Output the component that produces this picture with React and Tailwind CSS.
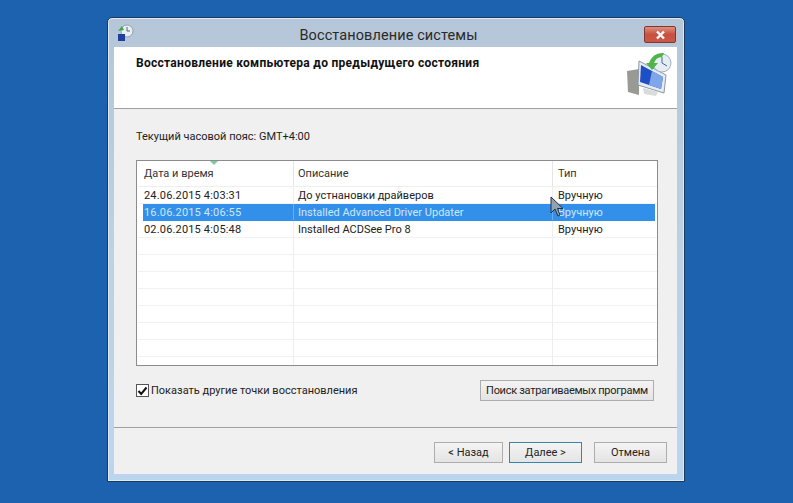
const font = { fontFamily: 'Roboto, "Noto Sans", sans-serif' };

const rows = [
  ['24.06.2015 4:03:31', 'До устнановки драйверов', 'Вручную'],
  ['16.06.2015 4:06:55', 'Installed Advanced Driver Updater', 'Вручную', true],
  ['02.06.2015 4:05:48', 'Installed ACDSee Pro 8', 'Вручную'],
  [], [], [], [], [], [], [], [],
];

function Row({ cells }) {
  const selected = cells[3];
  return (
    <div className={`flex h-[17px] items-center border-b text-[11px] leading-none ${selected ? 'ml-[5px] mr-[2px] border-[#3390ea] bg-[#3390ea] text-[#cfe6fb]' : 'border-[#f1f1f1] text-[#222]'}`}>
      <div className={`flex h-full items-center border-r tracking-[0.17px] ${selected ? 'w-[151px] pl-[1px] border-[#6aaef0]' : 'w-[156px] pl-[6px] border-[#eeeeee]'}`}>{cells[0]}</div>
      <div className={`flex h-full w-[259px] items-center border-r pl-[4px] ${selected ? 'border-[#6aaef0]' : 'border-[#eeeeee]'}`}>{cells[1]}</div>
      <div className="flex-1 pl-[5px]">{cells[2]}</div>
    </div>
  );
}

function Button({ className, children }) {
  return (
    <button className={`flex h-[21px] items-center justify-center whitespace-nowrap border bg-gradient-to-b from-[#f4f4f4] to-[#e4e4e4] text-[11px] leading-none text-[#222] ${className}`}>
      {children}
    </button>
  );
}

function RestoreIcon() {
  return (
    <svg width="46" height="46" viewBox="0 0 46 46" className="absolute right-[5px] top-[4px]">
      <path d="M1 20 L13 18 L13 44 L2 41 Z" fill="#9a9a94" />
      <path d="M13 10 L40 24 L38 42 L12 34 Z" fill="#e6ecf2" stroke="#8d97a3" />
      <path d="M15 14 L37 26 L35 38 L14 31 Z" fill="#1f4fc4" />
      <path d="M26 20 L37 26 L35 38 L23 34 Z" fill="#7fa6e8" />
      <path d="M17 37 L32 41 L30 45 L18 43 Z" fill="#d9dcdc" />
      <circle cx="36" cy="12" r="9" fill="#e6edf4" stroke="#9fb0c0" />
      <path d="M36 6 V12 L41 15" fill="none" stroke="#4c6a86" />
      <path d="M23 12 Q27 1 38 2 L36 6 Q30 6 28 12 L32 12 L26 19 L20 12 Z" fill="#4fb548" />
    </svg>
  );
}

function SmallIcon() {
  return (
    <svg width="18" height="18" viewBox="0 0 18 18" className="ml-[8px] mt-[6px] shrink-0">
      <circle cx="11" cy="7" r="6" fill="#e8eef2" stroke="#93a5ae" />
      <path d="M11 3 V7 H14" fill="none" stroke="#567" />
      <path d="M2 7 L6 2 L8 6 Z" fill="#3fa84a" />
      <rect x="2" y="10" width="7" height="7" fill="#1f3f9c" />
    </svg>
  );
}

function Cursor() {
  return (
    <svg width="14" height="22" viewBox="0 0 14 22" className="absolute left-[436px] top-[87px]">
      <path d="M1 1 V17 L5 13 L8 20 L10 19 L7.5 12.5 L13 12.5 Z" fill="#8fa3b4" stroke="#26303a" strokeWidth="1" />
    </svg>
  );
}

export default function App() {
  return (
    <div className="h-[503px] w-[793px] overflow-hidden bg-[#1c62ae] pl-[107px] pt-[17px]" style={font}>
      <div className="flex h-[465px] w-[578px] flex-col rounded-t-[5px] border border-[#1b3b5e] bg-gradient-to-b from-[#b4c6d8] via-[#bdd0e4] to-[#bcd5ee] shadow-[inset_0_0_0_1px_#dfe9f3]">
        <div className="relative flex h-[29px] shrink-0">
          <SmallIcon />
          <div className="flex-1 pr-[41px] pt-[8px] text-center text-[14.5px] leading-[20px] tracking-[0.1px] text-[#2a2a2a]">Восстановление системы</div>
          <button className="absolute right-[8px] top-[8px] flex h-[17px] w-[32px] items-center justify-center rounded-[2px] border border-[#7c3a32] bg-gradient-to-b from-[#dd8f80] via-[#c8503e] to-[#c9584a]">
            <svg width="11" height="10" viewBox="0 0 11 10">
              <path d="M2 1.5 L9 8.5 M9 1.5 L2 8.5" stroke="#fff" strokeWidth="2.4" />
            </svg>
          </button>
        </div>
        <div className="ml-[6px] mr-[7px] flex h-[427px] flex-col bg-[#f0f0f0]">
          <div className="relative h-[62px] shrink-0 border-b border-[#a0a0a0] bg-white pl-[22px] pt-[9px] text-[12px] font-bold leading-[15px] tracking-[0.28px] text-[#111]">
            Восстановление компьютера до предыдущего состояния
            <RestoreIcon />
          </div>
          <div className="relative flex-1">
            <div className="pl-[22px] pt-[20px] text-[11px] leading-[15px] text-[#222]">Текущий часовой пояс: GMT+4:00</div>
            <div className="relative ml-[22px] mt-[16px] h-[206px] w-[522px] overflow-hidden border border-[#8c8c8c] bg-white pl-[1px]">
              <div className="flex h-[26px] items-center border-b border-[#eeeeee] text-[11px] leading-none text-[#333]">
                <div className="flex h-full w-[156px] items-center border-r border-[#e5e5e5] pl-[6px]">Дата и время</div>
                <div className="flex h-full w-[259px] items-center border-r border-[#e5e5e5] pl-[4px]">Описание</div>
                <div className="pl-[5px]">Тип</div>
              </div>
              {rows.map((r, i) => <Row key={i} cells={r} />)}
              <svg width="8" height="4" viewBox="0 0 8 4" className="absolute left-[73px] top-0">
                <path d="M0 0 H8 L4 4 Z" fill="#7fc9a0" />
              </svg>
            </div>
            <Cursor />
            <div className="ml-[22px] mr-[23px] mt-[14px] flex h-[21px] items-center">
              <div className="flex h-[13px] w-[13px] items-center justify-center border border-[#555] bg-white">
                <svg width="11" height="10" viewBox="0 0 11 10">
                  <path d="M1.5 5 L4.2 8 L9.5 1.5" fill="none" stroke="#111" strokeWidth="2" />
                </svg>
              </div>
              <span className="ml-[2px] text-[11px] leading-none text-[#222]">Показать другие точки восстановления</span>
              <Button className="ml-auto w-[174px] border-[#adadad] tracking-[-0.28px]">Поиск затрагиваемых программ</Button>
            </div>
            <div className="mt-[26px] h-px bg-[#a0a0a0]" />
            <div className="flex justify-end gap-[6px] pr-[10px] pt-[14px]">
              <Button className="w-[69px] border-[#adadad]">&lt; Назад</Button>
              <Button className="w-[73px] border-[#3a84ac]">Далее &gt;</Button>
              <Button className="ml-[6px] w-[73px] border-[#adadad]">Отмена</Button>
            </div>
          </div>
        </div>
      </div>
    </div>
  );
}
